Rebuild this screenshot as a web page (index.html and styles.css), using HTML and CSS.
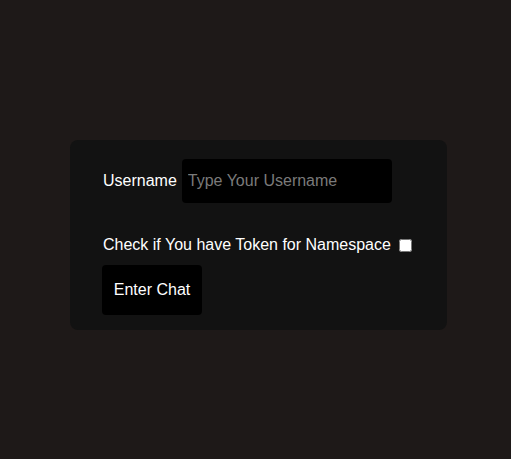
FILE: index.html
```html
<!DOCTYPE html>
<html>
<head>
<meta charset="utf-8">
<link rel="stylesheet" href="styles.css">
</head>
<body>
<div class="page">
  <form class="card">
    <div class="row user-row">
      <label class="label" for="u">Username</label>
      <input id="u" class="input" type="text" placeholder="Type Your Username">
    </div>
    <div class="row check-row">
      <label class="label" for="t">Check if You have Token for Namespace</label>
      <input id="t" class="check" type="checkbox">
    </div>
    <button type="button" class="btn">Enter Chat</button>
  </form>
</div>
</body>
</html>
```

FILE: styles.css
```css
html, body {
  margin: 0;
  padding: 0;
  background: #1e1918;
  height: 100%;
}
body {
  font-family: "Liberation Sans", Arial, sans-serif;
  font-size: 16px;
  color: #fff;
}
.page {
  padding: 140px 0 0 70px;
}
.card {
  box-sizing: border-box;
  width: 377px;
  height: 190px;
  background: #121212;
  border-radius: 8px;
  padding: 19px 32px 0 32px;
  display: flex;
  flex-direction: column;
  align-items: flex-start;
}
.row {
  display: flex;
  align-items: center;
}
.label {
  color: #fff;
  line-height: 18px;
}
.user-row .label {
  margin-left: 1px;
}
.input {
  box-sizing: border-box;
  width: 210px;
  height: 44px;
  margin-left: 5px;
  background: #000;
  border: none;
  border-radius: 4px;
  padding: 0 6px;
  font-family: "Liberation Sans", Arial, sans-serif;
  font-size: 16px;
  color: #fff;
  outline: none;
}
.input::placeholder {
  color: #7a7a7a;
}
.check-row {
  margin-top: 33px;
  margin-left: 1px;
}
.check {
  width: 13px;
  height: 13px;
  margin: 0 0 0 8px;
}
.btn {
  margin-top: 11px;
  width: 100px;
  height: 50px;
  background: #000;
  color: #fff;
  border: none;
  border-radius: 4px;
  font-family: "Liberation Sans", Arial, sans-serif;
  font-size: 16px;
  padding: 0;
}
```
